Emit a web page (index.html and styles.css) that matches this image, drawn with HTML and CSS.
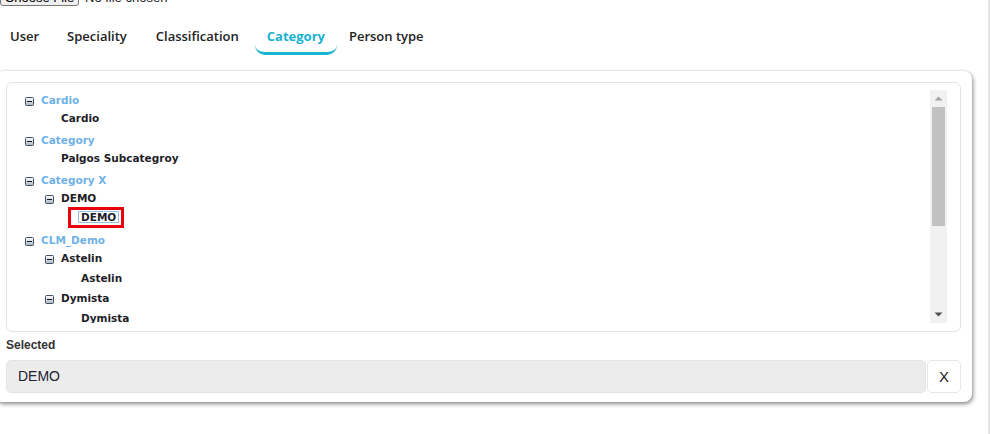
FILE: index.html
```html
<!DOCTYPE html>
<html lang="en">
<head>
<meta charset="utf-8">
<title>Category tree</title>
<link rel="stylesheet" href="styles.css">
</head>
<body>
<svg class="defs" width="0" height="0" aria-hidden="true">
  <defs>
    <linearGradient id="boxfill" x1="0" y1="0" x2="0" y2="1">
      <stop offset="0" stop-color="#ffffff"/>
      <stop offset="1" stop-color="#aab5c1"/>
    </linearGradient>
  </defs>
</svg>
<div class="page">
  <div class="file-row">
    <button class="file-btn" type="button">Choose File</button>
    <span class="file-name">No file chosen</span>
  </div>

  <nav class="tabs">
    <a class="tab tab-user">User</a>
    <a class="tab tab-spec">Speciality</a>
    <a class="tab tab-class">Classification</a>
    <a class="tab tab-cat active">Category</a>
    <a class="tab tab-person">Person type</a>
  </nav>

  <section class="card">
    <div class="tree-box">
      <div class="tree-scroll">
        <div class="tree">
          <div class="row lvl0 node"><span class="tg"><svg width="9" height="9" viewBox="0 0 9 9"><rect x="0.5" y="0.5" width="8" height="8" rx="1" fill="url(#boxfill)" stroke="#3f4f62"/><path d="M2 4.5h5" stroke="#101820"/></svg></span><span class="parent">Cardio</span></div>
          <div class="row lvl1 leaf"><span class="txt">Cardio</span></div>

          <div class="row lvl0 node gap4"><span class="tg"><svg width="9" height="9" viewBox="0 0 9 9"><rect x="0.5" y="0.5" width="8" height="8" rx="1" fill="url(#boxfill)" stroke="#3f4f62"/><path d="M2 4.5h5" stroke="#101820"/></svg></span><span class="parent">Category</span></div>
          <div class="row lvl1 leaf"><span class="txt">Palgos Subcategroy</span></div>

          <div class="row lvl0 node gap4"><span class="tg"><svg width="9" height="9" viewBox="0 0 9 9"><rect x="0.5" y="0.5" width="8" height="8" rx="1" fill="url(#boxfill)" stroke="#3f4f62"/><path d="M2 4.5h5" stroke="#101820"/></svg></span><span class="parent">Category X</span></div>
          <div class="row lvl1 node"><span class="tg"><svg width="9" height="9" viewBox="0 0 9 9"><rect x="0.5" y="0.5" width="8" height="8" rx="1" fill="url(#boxfill)" stroke="#3f4f62"/><path d="M2 4.5h5" stroke="#101820"/></svg></span><span class="txt">DEMO</span></div>
          <div class="row lvl2 leaf gap1"><span class="txt selected">DEMO</span></div>

          <div class="row lvl0 node gap5"><span class="tg"><svg width="9" height="9" viewBox="0 0 9 9"><rect x="0.5" y="0.5" width="8" height="8" rx="1" fill="url(#boxfill)" stroke="#3f4f62"/><path d="M2 4.5h5" stroke="#101820"/></svg></span><span class="parent">CLM_Demo</span></div>
          <div class="row lvl1 node"><span class="tg"><svg width="9" height="9" viewBox="0 0 9 9"><rect x="0.5" y="0.5" width="8" height="8" rx="1" fill="url(#boxfill)" stroke="#3f4f62"/><path d="M2 4.5h5" stroke="#101820"/></svg></span><span class="txt">Astelin</span></div>
          <div class="row lvl2 leaf gap2"><span class="txt">Astelin</span></div>
          <div class="row lvl1 node gap2"><span class="tg"><svg width="9" height="9" viewBox="0 0 9 9"><rect x="0.5" y="0.5" width="8" height="8" rx="1" fill="url(#boxfill)" stroke="#3f4f62"/><path d="M2 4.5h5" stroke="#101820"/></svg></span><span class="txt">Dymista</span></div>
          <div class="row lvl2 leaf gap2"><span class="txt">Dymista</span></div>
        </div>
        <div class="vscroll" aria-hidden="true">
          <div class="sb-btn"><svg width="9" height="5" viewBox="0 0 9 5"><path d="M0.5 4.5L4.5 0.5L8.5 4.5Z" fill="#a3a3a3"/></svg></div>
          <div class="sb-track"><div class="sb-thumb"></div></div>
          <div class="sb-btn"><svg width="9" height="5" viewBox="0 0 9 5"><path d="M0.5 0.5L4.5 4.5L8.5 0.5Z" fill="#505050"/></svg></div>
        </div>
      </div>
    </div>

    <div class="sel-label">Selected</div>
    <div class="sel-row">
      <div class="sel-value">DEMO</div>
      <button class="sel-clear" type="button">X</button>
    </div>
  </section>
</div>
</body>
</html>
```
FILE: styles.css
```css
html, body {
  margin: 0;
  padding: 0;
  background: #ffffff;
}

.defs {
  position: absolute;
  width: 0;
  height: 0;
}

.page {
  width: 990px;
  min-height: 434px;
  border-right: 2px solid #e6e6e6;
  box-sizing: border-box;
  overflow: hidden;
}

/* cropped file input at the very top */
.file-row {
  display: flex;
  align-items: flex-end;
  height: 21px;
  margin-top: -15px;
  font-family: "Liberation Sans", Arial, sans-serif;
  font-size: 13px;
  color: #222222;
}

.file-btn {
  display: inline-flex;
  align-items: flex-end;
  justify-content: center;
  width: 79px;
  height: 21px;
  margin: 0;
  padding: 0 0 1px 0;
  box-sizing: border-box;
  background: #efefef;
  border: 1px solid #767676;
  border-radius: 3px;
  font-family: inherit;
  font-size: 13px;
  line-height: 13px;
  color: #000000;
}

.file-name {
  margin-left: 6px;
  line-height: 13px;
  padding-bottom: 2px;
}

/* Tabs */
.tabs {
  display: flex;
  margin-top: 15px;
  font-family: "Open Sans", "Liberation Sans", sans-serif;
  font-size: 13px;
  font-weight: 600;
}

.tab {
  display: block;
  height: 34px;
  box-sizing: border-box;
  line-height: 31px;
  padding: 0 10px;
  color: #222222;
  border-bottom: 3px solid transparent;
  border-radius: 0 0 10px 10px;
  cursor: pointer;
}

.tab-user { margin-right: 8px; }
.tab-spec { margin-right: 9px; }
.tab-class { margin-right: 6px; }
.tab-cat { margin-right: 2px; padding: 0 12px; }

.tab.active {
  color: #19b2d2;
  font-weight: 700;
  border-bottom-color: #19b5d4;
}

/* Card */
.card {
  margin: 16px 0 0 -5px;
  width: 977px;
  box-sizing: border-box;
  padding: 11px 11px 9px 11px;
  background: #ffffff;
  border-radius: 8px;
  box-shadow: 1px 2px 4px rgba(0, 0, 0, 0.45), 0 0 2px rgba(0, 0, 0, 0.12);
}

.tree-box {
  border: 1px solid #e3e3e3;
  border-radius: 6px;
  padding: 7px 13px 8px 0;
}

.tree-scroll {
  display: flex;
  height: 233px;
}

.tree {
  flex: 1;
  overflow: hidden;
  padding-top: 1px;
  font-family: "DejaVu Sans", Verdana, sans-serif;
  font-size: 10.5px;
  font-weight: bold;
  color: #1e1e28;
}

.row {
  display: flex;
  align-items: center;
  height: 18px;
  white-space: nowrap;
}

.row.lvl0 { padding-left: 18px; }
.row.lvl1 { padding-left: 38px; }
.row.lvl2 { padding-left: 58px; }
.row.lvl1.leaf { padding-left: 54px; }
.row.lvl2.leaf { padding-left: 74px; }

.gap1 { margin-top: 1px; }
.gap2 { margin-top: 2px; }
.gap4 { margin-top: 4px; }
.gap5 { margin-top: 5px; }

.tg {
  display: flex;
  width: 9px;
  height: 9px;
  margin: 2px 7px 0 0;
}

.parent {
  color: #70b2e6;
}

.selected {
  position: relative;
  border: 1px solid #92bfe4;
  padding: 0 2px;
  margin-left: -3px;
  line-height: 10px;
}

.selected::after {
  content: "";
  position: absolute;
  left: -11px;
  right: -6px;
  top: -5px;
  bottom: -6px;
  border: 3px solid #e8000b;
}

/* Fake scrollbar */
.vscroll {
  width: 17px;
  display: flex;
  flex-direction: column;
  background: #f1f1f1;
}

.sb-btn {
  height: 17px;
  display: flex;
  align-items: center;
  justify-content: center;
}

.sb-track {
  flex: 1;
  padding: 0 2px;
}

.sb-thumb {
  height: 119px;
  background: #c1c1c1;
}

/* Selected value */
.sel-label {
  margin: 5px 0 7px 0;
  line-height: 16px;
  font-family: "Liberation Sans", Arial, sans-serif;
  font-size: 12px;
  font-weight: bold;
  color: #333333;
}

.sel-row {
  display: flex;
  height: 33px;
}

.sel-value {
  flex: 1;
  box-sizing: border-box;
  background: #ececec;
  border: 1px solid #e3e3e3;
  border-radius: 5px;
  padding-left: 11px;
  line-height: 31px;
  font-family: "Liberation Sans", Arial, sans-serif;
  font-size: 14px;
  color: #222233;
}

.sel-clear {
  width: 34px;
  height: 33px;
  margin-left: 1px;
  padding: 0;
  background: #ffffff;
  border: 1px solid #e6e6e6;
  border-radius: 5px;
  font-family: "Liberation Sans", Arial, sans-serif;
  font-size: 15px;
  color: #222222;
  cursor: pointer;
}
```
